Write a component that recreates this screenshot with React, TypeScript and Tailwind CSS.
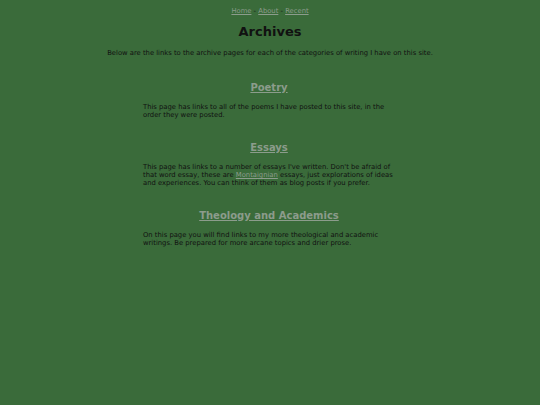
import React from 'react';

const sections = [
  {
    title: 'Poetry',
    body: <>This page has links to all of the poems I have posted to this site, in the order they were posted.</>,
  },
  {
    title: 'Essays',
    body: (
      <>
        This page has links to a number of essays I've written. Don't be afraid of that word essay, these are{' '}
        <a href="#" className="text-[#8c9c8c] underline">Montaignian</a> essays, just explorations of ideas and
        experiences. You can think of them as blog posts if you prefer.
      </>
    ),
  },
  {
    title: 'Theology and Academics',
    body: <>On this page you will find links to my more theological and academic writings. Be prepared for more arcane topics and drier prose.</>,
  },
];

export default function App() {
  return (
    <div className="min-h-[405px] bg-[#3a6b3a] text-[#111] font-['DejaVu_Sans',sans-serif] pt-[7px]">
      <nav className="text-center text-[6.8px] leading-[8px] text-[#111]">
        <a href="#" className="text-[#8c9c8c] underline">Home</a> - <a href="#" className="text-[#8c9c8c] underline">About</a> - <a href="#" className="text-[#8c9c8c] underline">Recent</a>
      </nav>
      <h1 className="text-center text-[13px] font-bold leading-[16px] mt-[9px]">Archives</h1>
      <p className="text-center text-[6.8px] leading-[8px] mt-[9px]">
        Below are the links to the archive pages for each of the categories of writing I have on this site.
      </p>
      <div className="mt-[25px] flex flex-col gap-[23px]">
        {sections.map((s) => (
          <section key={s.title} className="w-[252px] ml-[143px]">
            <h2 className="text-center text-[10px] font-bold leading-[12px] ml-[-12px] w-[276px]">
              <a href="#" className="text-[#8c9c8c] underline">{s.title}</a>
            </h2>
            <p className="text-[6.8px] leading-[8px] mt-[9px]">{s.body}</p>
          </section>
        ))}
      </div>
    </div>
  );
}
